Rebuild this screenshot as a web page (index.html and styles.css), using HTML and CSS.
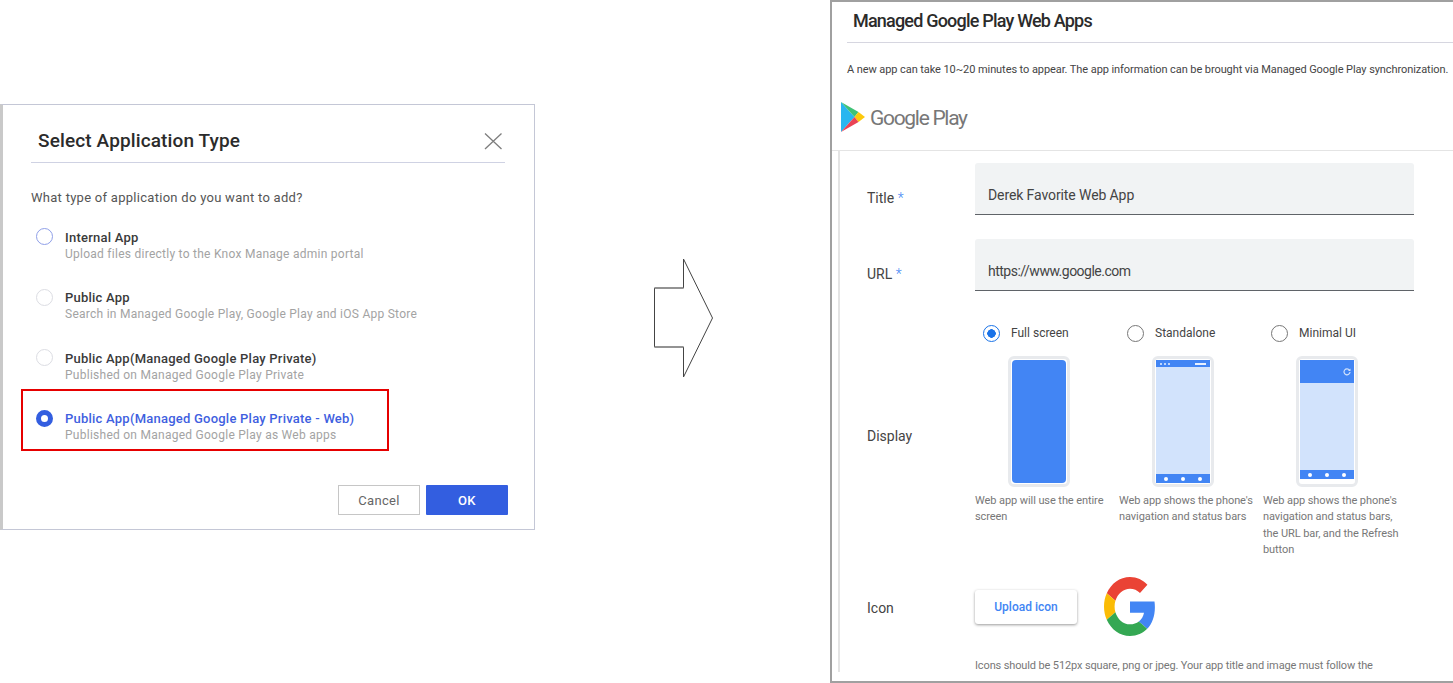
FILE: index.html
```html
<!DOCTYPE html>
<html lang="en">

<head>
  <meta charset="UTF-8">
  <meta name="viewport" content="width=device-width, initial-scale=1.0">
  <title>Managed Google Play Web Apps</title>
  <link rel="stylesheet" href="styles.css">
</head>

<body>

  <!-- left window -->
  <div class="dialog">
    <div class="dialog-head">
      <h2>Select Application Type</h2>
      <svg class="close" width="20" height="18" viewBox="0 0 20 18">
        <path d="M2 1.500 18.500 17M18.500 1.500 2 17" fill="none" stroke="#7d7d7d" stroke-width="1.300" />
      </svg>
    </div>
    <p class="question">What type of application do you want to add?</p>

    <div class="type-row">
      <span class="type-radio first"></span>
      <div class="type-text">
        <div class="type-title">Internal App</div>
        <div class="type-sub">Upload files directly to the Knox Manage admin portal</div>
      </div>
    </div>
    <div class="type-row">
      <span class="type-radio"></span>
      <div class="type-text">
        <div class="type-title">Public App</div>
        <div class="type-sub">Search in Managed Google Play, Google Play and iOS App Store</div>
      </div>
    </div>
    <div class="type-row">
      <span class="type-radio"></span>
      <div class="type-text">
        <div class="type-title">Public App(Managed Google Play Private)</div>
        <div class="type-sub">Published on Managed Google Play Private</div>
      </div>
    </div>
    <div class="type-row">
      <span class="type-radio on"></span>
      <div class="type-text">
        <div class="type-title blue">Public App(Managed Google Play Private - Web)</div>
        <div class="type-sub">Published on Managed Google Play as Web apps</div>
      </div>
    </div>

    <div class="dialog-btns">
      <button class="btn-cancel">Cancel</button>
      <button class="btn-ok">OK</button>
    </div>
    <div class="red-box"></div>
  </div>

  <svg class="arrow" width="62" height="120" viewBox="0 0 62 120">
    <path d="M2.500 30H31.500V1L60.500 60 31.500 119V89H2.500Z" fill="#fff" stroke="#444" stroke-width="1" />
    <path d="M2.500 30H31.500M2.500 89H31.500" fill="none" stroke="#8f8f8f" stroke-width="1.500" />
  </svg>

  <!-- right window -->
  <div class="panel">
    <h1>Managed Google Play Web Apps</h1>
    <p class="note">A new app can take 10~20 minutes to appear. The app information can be brought via Managed Google Play synchronization.</p>

    <div class="play-logo">
      <svg width="24" height="30" viewBox="0 0 24 30">
        <path d="M0 0 13.500 15 0 30Z" fill="#29b6f0" />
        <path d="M0 0 17.500 10 13.500 15Z" fill="#3fc276" />
        <path d="M17.500 10 24 15 17.500 20 13.500 15Z" fill="#fdc90b" />
        <path d="M0 30 13.500 15 17.500 20Z" fill="#ea4355" />
      </svg>
      <span>Google Play</span>
    </div>

    <div class="form">
      <div class="form-row">
        <div class="form-label">Title <i>*</i></div>
        <div class="field">Derek Favorite Web App</div>
      </div>
      <div class="form-row">
        <div class="form-label">URL <i>*</i></div>
        <div class="field url">https://www.google.com</div>
      </div>

      <div class="form-row display-row">
        <div class="form-label">Display</div>
        <div class="modes">
          <div class="mode">
            <div class="mode-head"><span class="mode-radio on"></span>Full screen</div>
            <div class="phone">
              <div class="screen-full"></div>
            </div>
            <p class="caption">Web app will use the entire screen</p>
          </div>
          <div class="mode">
            <div class="mode-head"><span class="mode-radio"></span>Standalone</div>
            <div class="phone">
              <div class="status-bar"><b></b><b></b><b></b><em></em></div>
              <div class="screen-body"></div>
              <div class="nav-bar"><b></b><b></b><b></b></div>
            </div>
            <p class="caption">Web app shows the phone's navigation and status bars</p>
          </div>
          <div class="mode">
            <div class="mode-head"><span class="mode-radio"></span>Minimal UI</div>
            <div class="phone">
              <div class="url-bar">
                <svg width="8" height="8" viewBox="0 0 8 8">
                  <path d="M6.500 2.200A3 3 0 1 0 7 4" fill="none" stroke="#d2e3fc" stroke-width="1.200" />
                  <path d="M7.500 .5V3H5Z" fill="#d2e3fc" />
                </svg>
              </div>
              <div class="screen-body"></div>
              <div class="nav-bar"><b></b><b></b><b></b></div>
              <div class="chin"></div>
            </div>
            <p class="caption">Web app shows the phone's navigation and status bars, the URL bar, and the Refresh button</p>
          </div>
        </div>
      </div>

      <div class="form-row icon-row">
        <div class="form-label">Icon</div>
        <button class="upload">Upload icon</button>
        <svg class="g-logo" width="52" height="59" viewBox="0 0 48 48" preserveAspectRatio="none">
          <path fill="#EA4335" d="M24 9.500c3.540 0 6.710 1.220 9.210 3.600l6.850-6.850C35.900 2.380 30.470 0 24 0 14.620 0 6.510 5.380 2.560 13.220l7.980 6.190C12.430 13.720 17.740 9.500 24 9.500z" />
          <path fill="#4285F4" d="M46.980 24.550c0-1.570-.15-3.090-.38-4.550H24v9.020h12.940c-.58 2.960-2.260 5.480-4.780 7.180l7.730 6c4.510-4.180 7.090-10.360 7.090-17.650z" />
          <path fill="#FBBC05" d="M10.530 28.590c-.48-1.450-.76-2.990-.76-4.590s.27-3.140.76-4.590l-7.980-6.190C.92 16.460 0 20.120 0 24c0 3.880.92 7.540 2.560 10.780l7.970-6.190z" />
          <path fill="#34A853" d="M24 48c6.480 0 11.930-2.130 15.890-5.810l-7.730-6c-2.150 1.450-4.920 2.300-8.160 2.300-6.260 0-11.570-4.220-13.470-9.910l-7.980 6.190C6.510 42.620 14.620 48 24 48z" />
        </svg>
      </div>
      <p class="icon-note">Icons should be 512px square, png or jpeg. Your app title and image must follow the</p>
    </div>
  </div>

</body>

</html>
```

FILE: styles.css
```css
* {
  box-sizing: border-box;
}

html,
body {
  margin: 0;
  height: 100%;
  background: #fff;
  overflow: hidden;
}

body {
  position: relative;
  font-family: Roboto, "Liberation Sans", sans-serif;
}

button {
  font-family: inherit;
  cursor: pointer;
}

/* left window */
.dialog {
  position: absolute;
  top: 104px;
  left: 0;
  width: 535px;
  height: 426px;
  padding: 0 29px 0 28px;
  background: #fff;
  border: 1px solid #c4c7d6;
  border-left: 3px solid #c9c9c9;
}

.dialog-head {
  display: flex;
  justify-content: space-between;
  align-items: center;
  height: 58px;
  padding: 14px 2px 0 7px;
  border-bottom: 1px solid #cfd2e3;
}

.dialog-head h2 {
  margin: 0;
  font-size: 19px;
  font-weight: 500;
  letter-spacing: .13px;
  color: #2b2b2b;
}

.question {
  margin: 27px 0 21px;
  font-size: 13px;
  line-height: 16px;
  letter-spacing: .28px;
  color: #555;
}

.type-row {
  display: flex;
  align-items: flex-start;
  gap: 12px;
  height: 60.500px;
  padding-left: 5px;
}

.type-radio {
  width: 17px;
  height: 17px;
  margin-top: 1px;
  border: 1px solid #dcdde3;
  border-radius: 50%;
}

.type-radio.first {
  border: 1.500px solid #8f9fe8;
}

.type-radio.on {
  border: 5px solid #335ee0;
}

.type-text {
  padding-top: 2.500px;
}

.type-title {
  font-size: 13px;
  line-height: 16px;
  font-weight: 500;
  letter-spacing: .23px;
  color: #3a3a3a;
}

.type-title.blue {
  color: #3f5fe0;
}

.type-sub {
  font-size: 12px;
  line-height: 16px;
  letter-spacing: .26px;
  color: #a3a3a3;
}

.dialog-btns {
  display: flex;
  justify-content: flex-end;
  gap: 6px;
  margin-top: 16px;
  margin-right: -3px;
}

.btn-cancel,
.btn-ok {
  width: 82px;
  height: 30px;
  font-size: 13px;
  letter-spacing: .3px;
}

.btn-cancel {
  background: #fff;
  border: 1px solid #c6c6c6;
  color: #666;
}

.btn-ok {
  background: #335ee0;
  border: 0;
  border-radius: 1px;
  font-weight: 500;
  color: #fff;
}

.red-box {
  position: absolute;
  top: 284px;
  left: 18px;
  width: 368px;
  height: 62px;
  border: 2px solid #e60000;
}

.arrow {
  position: absolute;
  top: 258px;
  left: 652px;
}

/* right window */
.panel {
  position: absolute;
  top: 0;
  left: 830px;
  width: 623px;
  height: 683px;
  padding-top: 9px;
  background: #fff;
  border: 2px solid #a0a0a0;
  border-right: 0;
}

.panel h1 {
  margin: 0 0 0 15px;
  height: 32px;
  padding-left: 6px;
  font-size: 18px;
  line-height: 20px;
  font-weight: 500;
  letter-spacing: -.8px;
  color: #2b2b2b;
  border-bottom: 1px solid #d6d6e0;
}

.note {
  margin: 19px 0 0 15px;
  font-size: 11px;
  line-height: 16px;
  letter-spacing: -.08px;
  white-space: nowrap;
  color: #444;
}

.play-logo {
  display: flex;
  align-items: center;
  gap: 5px;
  height: 46px;
  margin-top: 16px;
  padding-left: 9px;
}

.play-logo span {
  padding-top: 2px;
  font-size: 21px;
  letter-spacing: -1.300px;
  color: #777;
}

.form {
  margin-top: 10px;
  height: 522px;
  padding: 12px 39px 0 35px;
  border-top: 1px solid #e4e4e4;
  background: linear-gradient(#e4e4e4, #e4e4e4) 6px 0 / 2px 100% no-repeat;
}

.form-row {
  display: grid;
  grid-template-columns: 108px 1fr;
  align-items: center;
  margin-bottom: 24px;
}

.form-label {
  padding-top: 18px;
  font-size: 14px;
  color: #444;
}

.form-label i {
  font-style: normal;
  font-weight: 300;
  color: #4285f4;
}

.field {
  height: 52px;
  padding: 23px 13px 0;
  background: #f1f3f4;
  border-bottom: 1px solid #5f6368;
  border-radius: 3px 3px 0 0;
  font-size: 14px;
  line-height: 18px;
  letter-spacing: -.1px;
  color: #444;
}

.field.url {
  letter-spacing: -.5px;
}

.display-row {
  margin: 33px 0 0;
  align-items: start;
}

.display-row .form-label {
  margin-top: 102px;
  padding-top: 2px;
}

.modes {
  display: grid;
  grid-template-columns: repeat(3, 144px);
}

.mode-head {
  display: flex;
  align-items: center;
  gap: 11px;
  height: 18px;
  padding-left: 8px;
  font-size: 12px;
  color: #444;
}

.mode-radio {
  width: 17px;
  height: 17px;
  border: 1.500px solid #777;
  border-radius: 50%;
}

.mode-radio.on {
  border-color: #1a73e8;
  background: radial-gradient(circle, #1a73e8 4px, transparent 4.500px);
}

.phone {
  display: flex;
  flex-direction: column;
  width: 62px;
  height: 131px;
  margin: 14px 0 0 33px;
  padding: 1px 1px;
  background: #fff;
  border: 3px solid #e8eaed;
  border-radius: 6px;
}

.screen-full {
  flex: 1;
  background: #4285f4;
  border-radius: 4px;
}

.screen-body {
  flex: 1;
  background: #d2e3fc;
}

.status-bar {
  display: flex;
  align-items: center;
  gap: 2px;
  height: 7px;
  padding: 0 4px;
  background: #4285f4;
}

.status-bar b {
  width: 2px;
  height: 2px;
  background: #e8f0fe;
  border-radius: 50%;
}

.status-bar em {
  width: 11px;
  height: 2px;
  margin-left: auto;
  background: #e8f0fe;
}

.nav-bar {
  display: flex;
  justify-content: space-around;
  align-items: center;
  height: 9px;
  padding: 0 2px;
  background: #4285f4;
}

.nav-bar b {
  width: 4px;
  height: 4px;
  background: #fff;
  border-radius: 50%;
}

.url-bar {
  display: flex;
  justify-content: flex-end;
  align-items: center;
  height: 23px;
  padding-right: 3px;
  background: #4285f4;
}

.chin {
  height: 4px;
}

.caption {
  margin: 6px 0 0;
  padding-right: 2px;
  font-size: 11px;
  line-height: 16.300px;
  letter-spacing: -.08px;
  color: #777;
}

.icon-row {
  grid-template-columns: 108px 102px 1fr;
  height: 59px;
  margin: 19px 0 0;
}

.icon-row .form-label {
  padding-top: 2px;
}

.upload {
  height: 34px;
  background: #fff;
  border: 0;
  border-radius: 3px;
  box-shadow: 0 1px 3px rgba(0, 0, 0, .4);
  font-size: 12px;
  font-weight: 500;
  color: #4285f4;
}

.g-logo {
  margin-left: 27px;
}

.icon-note {
  margin: 22px 0 0 108px;
  font-size: 11px;
  line-height: 16px;
  letter-spacing: -.13px;
  white-space: nowrap;
  color: #777;
}
```
